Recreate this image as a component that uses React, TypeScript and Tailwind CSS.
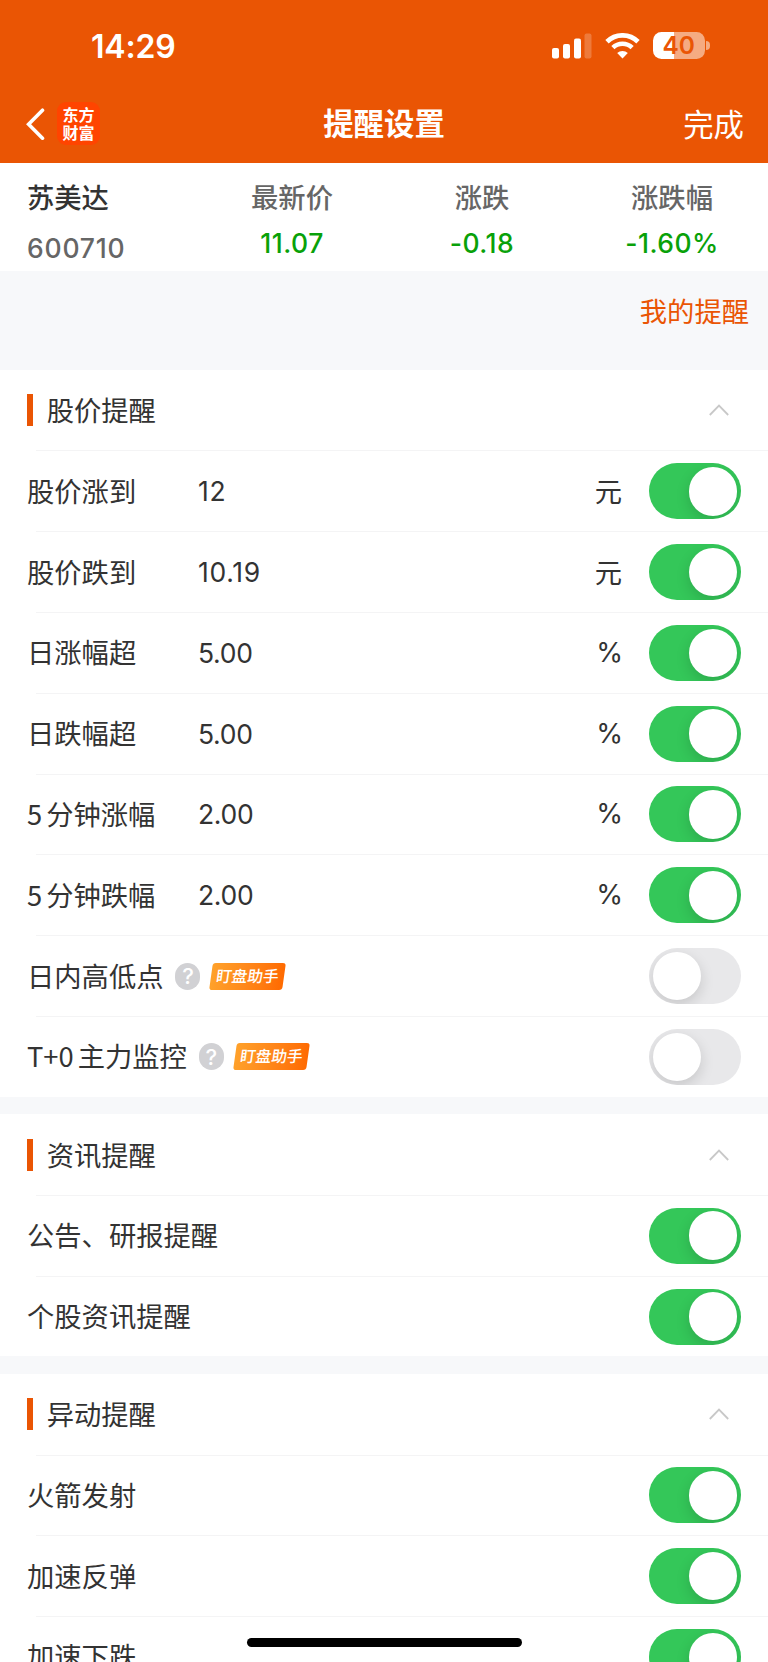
import { useState } from 'react';
import clsx from 'clsx';

interface AlertItem {
  prefix?: string;
  label: string;
  value?: string;
  unit?: string;
  assistant?: boolean;
  enabled: boolean;
}

interface AlertSection {
  title: string;
  items: AlertItem[];
}

const sections: AlertSection[] = [
  {
    title: '股价提醒',
    items: [
      { label: '股价涨到', value: '12', unit: '元', enabled: true },
      { label: '股价跌到', value: '10.19', unit: '元', enabled: true },
      { label: '日涨幅超', value: '5.00', unit: '%', enabled: true },
      { label: '日跌幅超', value: '5.00', unit: '%', enabled: true },
      { prefix: '5', label: '分钟涨幅', value: '2.00', unit: '%', enabled: true },
      { prefix: '5', label: '分钟跌幅', value: '2.00', unit: '%', enabled: true },
      { label: '日内高低点', assistant: true, enabled: false },
      { prefix: 'T+0', label: '主力监控', assistant: true, enabled: false },
    ],
  },
  {
    title: '资讯提醒',
    items: [
      { label: '公告、研报提醒', enabled: true },
      { label: '个股资讯提醒', enabled: true },
    ],
  },
  {
    title: '异动提醒',
    items: [
      { label: '火箭发射', enabled: true },
      { label: '加速反弹', enabled: true },
      { label: '加速下跌', enabled: true },
    ],
  },
];

const quotes = [
  { label: '最新价', value: '11.07' },
  { label: '涨跌', value: '-0.18' },
  { label: '涨跌幅', value: '-1.60%' },
];

function StatusBar() {
  return (
    <div className="flex h-[91px] items-center pl-[91px] pr-[58px]">
      <span className="pt-0.5 font-['Inter'] text-[32px] font-semibold leading-none tracking-[-0.2px]">14:29</span>
      <div className="ml-auto flex items-center">
        <svg width="40" height="26" viewBox="0 0 40 26" fill="white">
          <rect x="0" y="15" width="7" height="10.5" rx="2" />
          <rect x="11" y="11" width="7" height="14.5" rx="2" />
          <rect x="22" y="5.5" width="7" height="20" rx="2" />
          <rect x="32.5" y="0.5" width="7" height="25" rx="2" opacity="0.22" />
        </svg>
        <svg className="ml-[13px]" width="35" height="26" viewBox="0 0 35 26" fill="none" stroke="white">
          <path d="M2 8.7a22.2 22.2 0 0 1 31 0" strokeWidth="4.8" />
          <path d="M7.9 14.7a13.7 13.7 0 0 1 19.2 0" strokeWidth="4.6" />
          <path d="M17.5 25.5l-5.3-5.4a7.5 7.5 0 0 1 10.6 0z" fill="white" stroke="none" />
        </svg>
        <div className="ml-[13px] flex h-[27px] w-[51.5px] items-center justify-center rounded-[8.5px] bg-[linear-gradient(90deg,#fff_40%,#f5ab82_40%)]">
          <span className="font-['Inter'] text-[24.5px] font-semibold leading-none text-[#ea5504]">40</span>
        </div>
        <div className="ml-[1.5px] h-[9px] w-1 rounded-r-full bg-[#f5ab82]" />
      </div>
    </div>
  );
}

function NavBar() {
  return (
    <div className="flex h-[72px] items-start justify-between">
      <div className="flex w-[240px] items-center pl-[26px] pt-[11px]">
        <svg width="19" height="32" viewBox="0 0 19 32" fill="none" stroke="white" strokeWidth="3.6" strokeLinecap="round">
          <path d="M16.5 2.2L2.6 16.2L16.5 30.2" />
        </svg>
        <div className="ml-3 w-[43px] rounded-[9px] bg-[#ff4400] pb-1 pt-[3px] text-center text-[16px] font-bold leading-[18px]">
          东方
          <br />
          财富
        </div>
      </div>
      <h1 className="pt-[9px] text-[30.4px] font-bold leading-[44px]">提醒设置</h1>
      <button type="button" className="w-[240px] pr-[24px] pt-[10px] text-right text-[30.4px] leading-[44px]">
        完成
      </button>
    </div>
  );
}

function QuoteBar() {
  return (
    <div className="flex h-[108px] bg-white pl-[27px] font-medium">
      <div className="w-[170px]">
        <div className="pt-[13px] text-[27.3px] leading-10 text-[#333]">苏美达</div>
        <div className="mt-4 font-['Inter'] text-[26.5px] leading-8 tracking-[0.8px] text-[#666]">600710</div>
      </div>
      {quotes.map((quote) => (
        <div key={quote.label} className="w-[190px] text-center">
          <div className="pt-[13px] text-[27.3px] leading-10 text-[#666]">{quote.label}</div>
          <div className="mt-[11px] font-['Inter'] text-[26.5px] leading-8 tracking-[0.5px] text-[#09a109]">
            {quote.value}
          </div>
        </div>
      ))}
    </div>
  );
}

function Toggle({ enabled, onChange }: { enabled: boolean; onChange: () => void }) {
  return (
    <button
      type="button"
      role="switch"
      aria-checked={enabled}
      onClick={onChange}
      className={clsx(
        'flex h-14 w-[92px] shrink-0 items-center overflow-hidden rounded-full px-[3.7px]',
        enabled ? 'justify-end bg-[#34c759]' : 'justify-start bg-[#e8e8ea]'
      )}
    >
      <span className="size-[48.6px] rounded-full bg-white shadow-[0_5px_14px_rgba(0,0,0,0.15)]" />
    </button>
  );
}

function AssistantTag() {
  return (
    <>
      <span className="ml-3 flex h-[27px] w-[25px] items-center justify-center rounded-full bg-[#d1d1d4] font-['Inter'] text-[22px] font-medium leading-none text-white">
        ?
      </span>
      <span className="ml-[11px] flex h-[27px] w-[73px] -skew-x-[8deg] items-center justify-center rounded-[3px] bg-linear-to-r from-[#ffa12a] to-[#ff6a00] pb-px text-[15.6px] font-medium leading-none text-white">
        盯盘助手
      </span>
    </>
  );
}

function AlertRow({ item }: { item: AlertItem }) {
  const [enabled, setEnabled] = useState(item.enabled);

  return (
    <div className="flex h-[80.8px] flex-col">
      <div className="ml-9 h-px shrink-0 bg-[#f4f4f5]" />
      <div className="flex flex-1 items-center px-[27px]">
        <span className={clsx('whitespace-nowrap pb-[3px]', item.value && 'w-[171px]')}>
          {item.prefix && <span className="mr-1">{item.prefix}</span>}
          {item.label}
        </span>
        {item.assistant && <AssistantTag />}
        {item.value && (
          <span className={clsx("font-['Inter'] text-[26.5px]", item.value.startsWith('1') ? 'tracking-[0.7px]' : 'tracking-[-0.3px]')}>
            {item.value}
          </span>
        )}
        <div className="ml-auto flex items-center">
          {item.unit && (
            <span className={clsx(item.unit === '%' ? "mr-[26px] font-['Inter'] text-[27.3px]" : 'mr-[27px] pb-[3px]')}>
              {item.unit}
            </span>
          )}
          <Toggle enabled={enabled} onChange={() => setEnabled(!enabled)} />
        </div>
      </div>
    </div>
  );
}

export default function App() {
  return (
    <div className="relative h-[1662px] w-[768px] overflow-hidden bg-[#f7f8fa] font-['Noto_Sans_CJK_SC',sans-serif]">
      <header className="h-[163.3px] bg-[#ea5504] text-white">
        <StatusBar />
        <NavBar />
      </header>
      <QuoteBar />

      <div className="flex h-[98.7px] justify-end pr-[19px] pt-[19px] text-[27.3px] leading-10 text-[#ea5504]">
        <span>我的提醒</span>
      </div>

      <main className="flex flex-col gap-[17.7px] text-[27.3px] leading-10 text-[#333]">
        {sections.map((section) => (
          <section key={section.title} className="bg-white">
            <div className="flex h-[80.4px] items-center pl-[27px] pr-[39px]">
              <span className="h-8 w-[5.7px] bg-[#ea5504]" />
              <h2 className="ml-[14px] pb-[2px]">{section.title}</h2>
              <svg className="ml-auto" width="20" height="12" viewBox="0 0 20 12" fill="none" stroke="#c8c8c8" strokeWidth="1.8">
                <path d="M0.8 11L10 1.6L19.2 11" />
              </svg>
            </div>
            {section.items.map((item) => (
              <AlertRow key={item.label} item={item} />
            ))}
          </section>
        ))}
      </main>

      {/* home indicator */}
      <div className="absolute bottom-[15px] left-[247px] h-[9px] w-[275px] rounded-full bg-black" />
    </div>
  );
}
